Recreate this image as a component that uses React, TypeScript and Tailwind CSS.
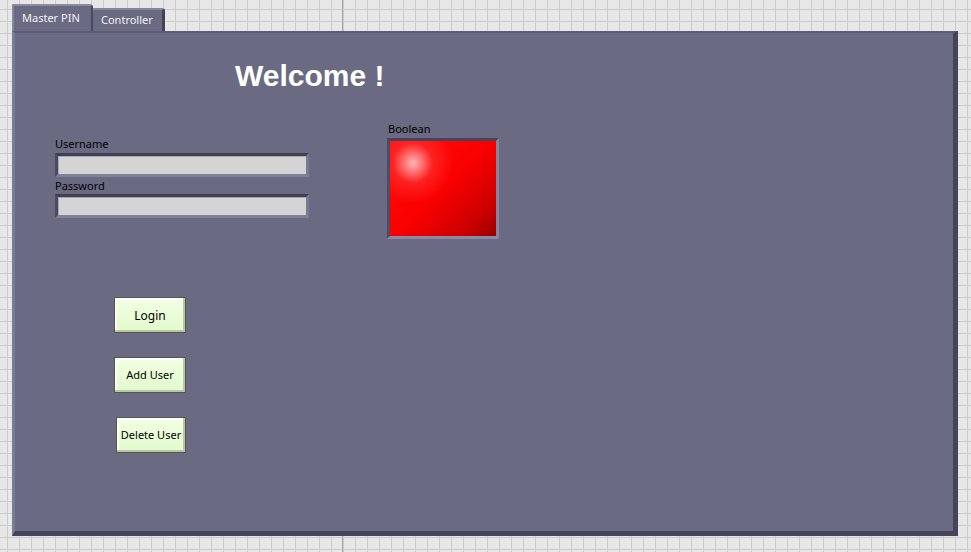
import React from 'react';

const FONT = "font-['Noto_Sans',_'DejaVu_Sans',_sans-serif]";

function Label({ children, className = '' }: { children: React.ReactNode; className?: string }) {
  return <div className={`h-[16px] text-[11px] leading-[19px] text-black ${className}`}>{children}</div>;
}

function Field({ className = '' }: { className?: string }) {
  return (
    <div
      className={`h-[24px] w-[254px] border-[3px] border-t-[#3f3f54] border-l-[#4a4a60] border-r-[#7a7a92] border-b-[#80809a] bg-[#d4d4d4] shadow-[inset_1px_1px_0_#a9a9b4] ${className}`}
    />
  );
}

function PanelButton({ children, className = '', text = 'text-[11px]' }: { children: React.ReactNode; className?: string; text?: string }) {
  return (
    <button
      className={`flex h-[36px] items-center justify-center border border-[#555555] bg-[linear-gradient(to_bottom,#f2ffe4,#e2facc)] pt-[1px] text-black shadow-[inset_-2px_-2px_0_#b6c9a3,inset_2px_2px_0_#fbfff4] ${text} ${className}`}
    >
      {children}
    </button>
  );
}

export default function App() {
  return (
    <div
      className={`h-[552px] w-[971px] overflow-hidden bg-[#e7e7e7] bg-[linear-gradient(to_right,transparent_342px,#a4a4a4_342px,#a4a4a4_343px,transparent_343px),linear-gradient(to_right,#cbcbcb_1px,transparent_1px),linear-gradient(to_bottom,#cbcbcb_1px,transparent_1px)] bg-size-[100%_100%,12px_12px,12px_12px] bg-position-[0_0,7px_9px,7px_9px] pl-[12px] pt-[6px] ${FONT}`}
      style={{ backgroundRepeat: 'no-repeat, repeat, repeat' }}
    >
      {/* tabs */}
      <div className="flex h-[25px] items-end">
        <div className="relative z-10 h-[27px] w-[81px] rounded-tr-[3px] border-l-[2px] border-t-[2px] border-r-[2px] border-l-[#8585a0] border-t-[#8a8aa4] border-r-[#4a4a5e] bg-[#6a6a83] pl-[8px] pt-[4px] text-[11px] leading-[16px] text-[#f2f2f2]">
          Master PIN
        </div>
        <div className="h-[23px] w-[72px] rounded-tr-[3px] border-t-[2px] border-r-[3px] border-t-[#8686a0] border-r-[#434356] bg-[#6a6a82] pl-[8px] pt-[2px] text-[11px] leading-[16px] text-[#f2f2f2]">
          Controller
        </div>
      </div>

      {/* panel */}
      <div className="h-[505px] w-[946px] border-l-[3px] border-t-[2px] border-r-[5px] border-b-[5px] border-l-[#7b7b94] border-t-[#5c5c74] border-r-[#44445a] border-b-[#45455a] bg-[#6a6a83]">
        <h1 className="ml-[220px] mt-[28px] h-[30px] font-['Liberation_Sans',_Arial,_sans-serif] text-[30px] leading-[30px] font-bold text-white">
          Welcome !
        </h1>

        <div className="mt-[28px] flex">
          <div className="ml-[40px] pt-[15px]">
            <Label>Username</Label>
            <Field className="mt-[3px]" />
            <Label className="-mt-[1px]">Password</Label>
            <Field className="mt-[2px]" />
          </div>

          <div className="ml-[78px]">
            <Label className="pl-[1px]">Boolean</Label>
            <div className="mt-[3px] h-[101px] w-[112px] border-[3px] border-t-[#44445a] border-l-[#4c4c62] border-r-[#8484a0] border-b-[#8a8aa4]">
              <div className="h-full w-full bg-[radial-gradient(circle_at_23px_22px,#ffb8b8_0px,#ff7a7a_8px,rgba(255,60,60,0.5)_20px,rgba(255,20,20,0)_40px),linear-gradient(135deg,#ff0d0d_0%,#fa0000_50%,#cc0000_82%,#950000_100%)]" />
            </div>
          </div>
        </div>

        <div className="ml-[99px] mt-[58px] flex flex-col gap-[24px]">
          <PanelButton className="w-[72px]" text="text-[12px]">Login</PanelButton>
          <PanelButton className="w-[72px]">Add User</PanelButton>
          <PanelButton className="ml-[2px] w-[70px]">Delete User</PanelButton>
        </div>
      </div>
    </div>
  );
}
